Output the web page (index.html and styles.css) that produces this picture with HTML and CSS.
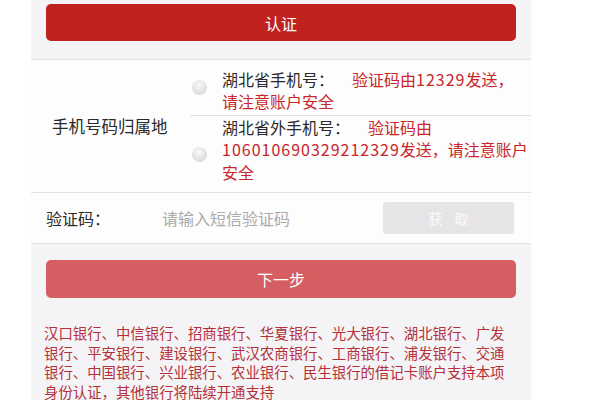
FILE: index.html
```html
<!DOCTYPE html>
<html lang="zh-CN">
<head>
<meta charset="utf-8">
<title>认证</title>
<link rel="stylesheet" href="styles.css">
</head>
<body>
<div class="page">
  <div class="top">
    <button class="btn btn-primary">认证</button>
  </div>
  <div class="owner">
    <div class="owner-label">手机号码归属地</div>
    <div class="options">
      <div class="option option-1">
        <span class="radio"></span>
        <div class="option-text">湖北省手机号：<span class="red">验证码由<span class="num">12329</span>发送，<br>请注意账户安全</span></div>
      </div>
      <div class="option option-2">
        <span class="radio"></span>
        <div class="option-text">湖北省外手机号：<span class="red">验证码由<br><span class="num">106010690329212329</span>发送，请注意账户<br>安全</span></div>
      </div>
    </div>
  </div>
  <div class="code-row">
    <span class="code-label">验证码：</span>
    <span class="code-input">请输入短信验证码</span>
    <button class="btn btn-get">获取</button>
  </div>
  <div class="bottom">
    <button class="btn btn-next">下一步</button>
    <p class="banks">汉口银行、中信银行、招商银行、华夏银行、光大银行、湖北银行、广发银行、平安银行、建设银行、武汉农商银行、工商银行、浦发银行、交通银行、中国银行、兴业银行、农业银行、民生银行的借记卡账户支持本项身份认证，其他银行将陆续开通支持</p>
  </div>
</div>
</body>
</html>
```
FILE: styles.css
```css
* { box-sizing: border-box; }
html, body {
  margin: 0;
  padding: 0;
  background: #ffffff;
  font-family: "Noto Sans CJK SC", "Noto Sans", sans-serif;
}
.page {
  width: 500px;
  margin-left: 31px;
  background: #f4f4f6;
  min-height: 400px;
}
.btn {
  border: none;
  font-family: inherit;
  display: block;
  padding: 0;
}
.top {
  padding: 4px 15px 0;
  height: 60px;
  border-bottom: 1px solid #e2e2e4;
}
.btn-primary {
  width: 470px;
  height: 37px;
  border-radius: 5px;
  background: #c0221f;
  color: #fff;
  font-size: 16px;
}
.owner {
  display: flex;
  background: #fdfdfd;
  border-bottom: 1px solid #e2e2e4;
  height: 133px;
}
.owner-label {
  width: 159px;
  padding-left: 21px;
  font-size: 16.5px;
  color: #2a2a2a;
  display: flex;
  align-items: center;
}
.options {
  flex: 1;
  display: flex;
  flex-direction: column;
}
.option {
  display: flex;
  align-items: center;
  padding-left: 2px;
}
.option-1 {
  height: 56px;
  border-bottom: 1px solid #e2e2e4;
}
.option-2 {
  flex: 1;
}
.radio {
  width: 15px;
  height: 15px;
  border-radius: 50%;
  background: radial-gradient(circle at 45% 35%, #fafafa 0%, #e6e6e6 45%, #cfcfcf 100%);
  flex: none;
  margin-right: 15px;
}
.option-text {
  font-size: 16px;
  line-height: 21.5px;
  color: #2a2a2a;
}
.option-1 .option-text { margin-top: 6px; }
.option-2 .option-text { margin-top: -9px; line-height: 22.5px; }
.red {
  color: #c8262a;
  margin-left: 18px;
}
.num {
  letter-spacing: 1px;
}
.code-row {
  display: flex;
  align-items: center;
  height: 51px;
  background: #fdfdfd;
  border-bottom: 1px solid #e2e2e4;
  padding-left: 15px;
}
.code-label {
  font-size: 16px;
  color: #2a2a2a;
  width: 116px;
}
.code-input {
  font-size: 16px;
  color: #ababab;
  flex: 1;
}
.btn-get {
  width: 131px;
  height: 32px;
  border-radius: 3px;
  background: #e6e4e7;
  color: #fbfbfb;
  font-size: 14px;
  letter-spacing: 12px;
  padding-left: 12px;
  margin-right: 17px;
}
.bottom {
  padding: 16px 15px 0 13px;
}
.btn-next {
  width: 470px;
  height: 38px;
  margin-left: 2px;
  border-radius: 5px;
  background: #d45e62;
  color: #fff;
  font-size: 16px;
}
.banks {
  margin: 25px 0 0;
  width: 466px;
  font-size: 14.4px;
  line-height: 19.7px;
  color: #b5303a;
}
```
